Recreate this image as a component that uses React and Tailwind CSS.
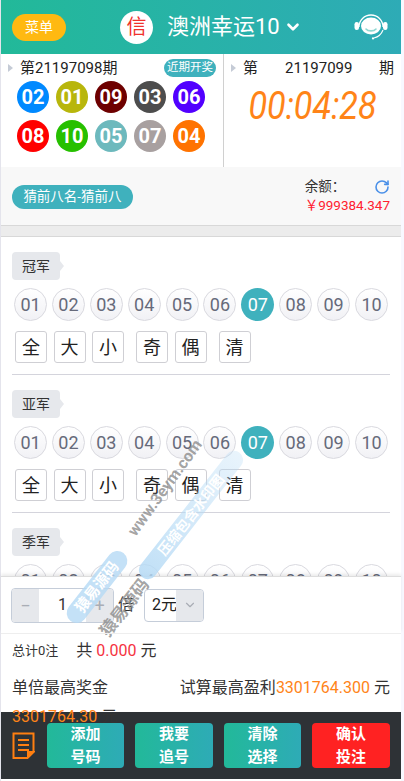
import React from 'react';
import { ChevronDown, RotateCw } from 'lucide-react';

const nums = ['01', '02', '03', '04', '05', '06', '07', '08', '09', '10'];
const quick = ['全', '大', '小', '奇', '偶', '清'];

const lastDraw = [
  ['02', 'bg-[#0089ff]'], ['01', 'bg-[#b8b60c]'], ['09', 'bg-[#6e0000]'], ['03', 'bg-[#4d4d4d]'], ['06', 'bg-[#5200ff]'],
  ['08', 'bg-[#ff0000]'], ['10', 'bg-[#26c000]'], ['05', 'bg-[#6db9bd]'], ['07', 'bg-[#a8a0a0]'], ['04', 'bg-[#ff7300]'],
];

const Triangle = () => (
  <span className="w-0 h-0 border-y-[4px] border-y-transparent border-l-[5px] border-l-[#c5cbd6]" />
);

const Rank = ({ title, picked }) => (
  <div className="pb-[11px] border-b border-[#d4d4dc] mb-[15px]">
    <div className="relative w-12 h-[28px] bg-[#e6e8ec] rounded-[4px] flex items-center justify-center text-[14px] text-[#333]">
      {title}
      <span className="absolute left-full top-[9px] w-0 h-0 border-y-[5px] border-y-transparent border-l-[4px] border-l-[#e6e8ec]" />
    </div>
    <div className="flex mt-2 pl-[2px] gap-[4.9px]">
      {nums.map((n) => (
        <span
          key={n}
          className={n === picked
            ? 'w-[33px] h-[33px] rounded-full bg-[#3fb1bd] text-white text-[18px] flex items-center justify-center'
            : 'w-[33px] h-[33px] rounded-full border border-[#d9d9df] bg-gradient-to-b from-white to-[#f1f1f5] text-[#666a7a] text-[18px] flex items-center justify-center'}
        >
          {n}
        </span>
      ))}
    </div>
    <div className="flex mt-[10px] pl-[3px]">
      {quick.map((q, i) => (
        <span
          key={q}
          className={`w-[32px] h-[32px] rounded-[3px] border border-[#cfcfd4] text-[#222] text-[18px] flex items-center justify-center ${i === 3 || i === 5 ? 'ml-[12px]' : i > 0 ? 'ml-[6.5px]' : ''}`}
        >
          {q}
        </span>
      ))}
    </div>
  </div>
);

const Watermark = () => (
  <>
    <span className="absolute left-[165px] top-[488px] -translate-x-1/2 -translate-y-1/2 -rotate-[54deg] text-[16px] font-bold text-[#8c8c8c]/80 whitespace-nowrap pointer-events-none">www.3eym.com</span>
    <span className="absolute left-[191px] top-[515px] -translate-x-1/2 -translate-y-1/2 -rotate-[52deg] w-[158px] h-[18px] rounded-full bg-gradient-to-r from-[#b5daf5]/85 to-[#b5daf5]/30 text-white text-[14px] leading-[18px] font-bold text-center whitespace-nowrap pointer-events-none">压缩包含水印图</span>
    <span className="absolute left-[97px] top-[587px] -translate-x-1/2 -translate-y-1/2 -rotate-[52deg] w-[86px] h-[20px] rounded-full bg-[#b5daf5]/80 text-white text-[15px] leading-[20px] font-bold text-center whitespace-nowrap pointer-events-none">猿易源码</span>
    <span className="absolute left-[125px] top-[608px] -translate-x-1/2 -translate-y-1/2 -rotate-[52deg] text-[17px] font-bold text-[#8c8c8c]/80 whitespace-nowrap pointer-events-none">猿易源码</span>
  </>
);

export default function App() {
  return (
    <div className="relative w-[404px] h-[781px] overflow-hidden bg-[#f8f8ff] font-['Roboto','Noto_Sans_CJK_SC',sans-serif]">
      <div className="absolute inset-y-0 left-0 w-px bg-[#e4e4ec]" />
      <div className="ml-px w-[400px] h-full bg-white flex flex-col relative">
        {/* header */}
        <div className="h-[54px] shrink-0 bg-gradient-to-r from-[#22b999] to-[#2eabb6] flex items-center pl-[11px] pr-[13px] text-white">
          <div className="w-[54px] h-[27px] rounded-full bg-[#ffb911] text-[14px] flex items-center justify-center">菜单</div>
          <div className="ml-[54px] w-[33px] h-[33px] rounded-full bg-white text-[#f0312c] text-[20px] flex items-center justify-center">信</div>
          <div className="ml-[14px] text-[22px] leading-none">澳洲幸运10</div>
          <ChevronDown size={18} strokeWidth={3.5} className="ml-[4px]" />
          <svg className="ml-auto" width="34" height="26" viewBox="0 0 34 26" fill="none">
            <path d="M5 13a12 12 0 0 1 24 0" stroke="white" strokeWidth="1.3" />
            <ellipse cx="17" cy="12" rx="10" ry="8.5" fill="white" />
            <path d="M12 15c2 2.5 8 2.5 10 0" stroke="#8fd8d2" strokeWidth="1.6" strokeLinecap="round" />
            <rect x="0.5" y="8" width="4.5" height="8" rx="2.2" fill="white" />
            <rect x="29" y="8" width="4.5" height="8" rx="2.2" fill="white" />
            <path d="M29 16c-1.5 4-5 7-9 8" stroke="white" strokeWidth="1.1" />
            <circle cx="19" cy="24.4" r="1.1" fill="white" />
          </svg>
        </div>

        {/* draw info */}
        <div className="h-[113px] shrink-0 flex">
          <div className="w-[223px] border-r border-[#d0d0d0] pt-[5px]">
            <div className="flex items-center pl-[7px] pr-[7px] h-[18px]">
              <Triangle />
              <span className="ml-[7px] text-[15px] text-[#222]">第21197098期</span>
              <span className="ml-auto w-[52px] h-[18px] rounded-full bg-[#3fb1bd] text-white text-[11.5px] flex items-center justify-center">近期开奖</span>
            </div>
            <div className="grid grid-cols-5 w-[195px] ml-[16px] mt-[4px] gap-y-[7px]">
              {lastDraw.map(([n, c]) => (
                <span key={n} className={`w-[32px] h-[32px] rounded-full ${c} text-white font-bold text-[20px] flex items-center justify-center`}>{n}</span>
              ))}
            </div>
          </div>
          <div className="flex-1 pt-[5px]">
            <div className="flex items-center pl-[7px] pr-[7px] h-[18px] text-[15px] text-[#222]">
              <Triangle />
              <span className="ml-[7px]">第</span>
              <span className="ml-[27px]">21197099</span>
              <span className="ml-auto">期</span>
            </div>
            <div className="mt-[9px] text-center text-[38px] leading-[40px] italic text-[#ff8418] scale-x-[0.9]">00:04:28</div>
          </div>
        </div>

        {/* play type and balance */}
        <div className="h-[58px] shrink-0 bg-[#f8f8f8] flex items-center justify-between pl-[11px] pr-[11px]">
          <div className="w-[121px] h-[24px] mt-[1px] rounded-full bg-[#3fb1bd] text-white text-[13.5px] flex items-center justify-center">猜前八名-猜前八</div>
          <div className="text-[13.5px] leading-[19px]">
            <div className="flex items-center justify-between text-[#333]">
              余额：
              <RotateCw size={16} strokeWidth={2.4} className="text-[#4a90e8]" />
            </div>
            <div className="text-[#ff2030]">￥999384.347</div>
          </div>
        </div>
        <div className="h-[12px] shrink-0 bg-[#ececec] border-y border-[#d8d8d8]" />

        <div className="h-[339px] shrink-0 overflow-hidden pl-[11px] pr-[11px] pt-[15px]">
          <Rank title="冠军" picked="07" />
          <Rank title="亚军" picked="07" />
          <Rank title="季军" />
        </div>

        {/* multiplier */}
        <div className="relative h-[57px] shrink-0 border-t border-[#dddddd] shadow-[0_-2px_3px_rgba(0,0,0,0.08)] bg-white flex items-center pl-[10px]">
          <div className="w-[103px] h-[35px] rounded-[4px] border border-[#c5cdd9] overflow-hidden flex items-center text-[18px]">
            <span className="w-[27px] h-full bg-[#e6e8ec] text-[#a9adb5] flex items-center justify-center">−</span>
            <span className="flex-1 text-center text-[#333] text-[16px]">1</span>
            <span className="w-[27px] h-full bg-[#e6e8ec] text-[#a9adb5] flex items-center justify-center">+</span>
          </div>
          <span className="ml-[4px] text-[16px] text-[#333]">倍</span>
          <div className="ml-[10px] w-[60px] h-[33px] rounded-[4px] border border-[#c5cdd9] overflow-hidden flex items-center">
            <span className="w-[31px] shrink-0 pl-[7px] text-[16px] text-[#222] whitespace-nowrap">2元</span>
            <span className="w-[27px] h-full bg-[#e6e8ec] flex items-center justify-center">
              <ChevronDown size={14} className="text-[#a9adb5]" />
            </span>
          </div>
        </div>

        {/* totals, the last line runs under the footer buttons */}
        <div className="relative z-10 flex-1 border-t border-[#eeeeee] pl-[11px] pr-[11px] pt-[6px] text-[#333]">
          <div className="flex items-center h-[22px]">
            <span className="text-[13px]">总计0注</span>
            <span className="ml-[18px] text-[16px]">共 <span className="text-[#f5333f]">0.000</span> 元</span>
          </div>
          <div className="flex justify-between mt-[11px] text-[16px] leading-[29px]">
            <span>单倍最高奖金</span>
            <span>试算最高盈利<span className="text-[#ff8418]">3301764.300</span> 元</span>
          </div>
          <div className="text-[16px] leading-[29px]"><span className="text-[#ff8418]">3301764.30</span> 元</div>
        </div>

        {/* footer */}
        <div className="absolute left-0 right-0 top-[712px] h-[67px] bg-[#2e3236]" />
        <div className="absolute z-20 left-0 right-0 top-[712px] h-[67px] flex items-center pl-[11px] pr-[11px]">
          <svg width="23" height="27" viewBox="0 0 23 27" fill="none" stroke="#ff7f11" strokeWidth="2">
            <path d="M15 26H1.5V1.5h20v18" />
            <path d="M6 8h11M6 13h11M6 18h11" />
            <path d="M16 25.5v-5.5h5.5z" fill="#ff7f11" />
          </svg>
          <div className="ml-[12px] flex-1 flex justify-between text-white font-bold text-[15px] leading-[23px] text-center">
            <button className="w-[77px] h-[45px] rounded-[4px] bg-gradient-to-r from-[#22b999] to-[#2eabb6] flex flex-col items-center justify-center"><span>添加</span><span>号码</span></button>
            <button className="w-[78px] h-[45px] rounded-[4px] bg-gradient-to-r from-[#22b999] to-[#2eabb6] flex flex-col items-center justify-center"><span>我要</span><span>追号</span></button>
            <button className="w-[77px] h-[45px] rounded-[4px] bg-gradient-to-r from-[#22b999] to-[#2eabb6] flex flex-col items-center justify-center"><span>清除</span><span>选择</span></button>
            <button className="w-[78px] h-[45px] rounded-[4px] bg-[#ff2222] flex flex-col items-center justify-center"><span>确认</span><span>投注</span></button>
          </div>
        </div>
      </div>
      <Watermark />
    </div>
  );
}
